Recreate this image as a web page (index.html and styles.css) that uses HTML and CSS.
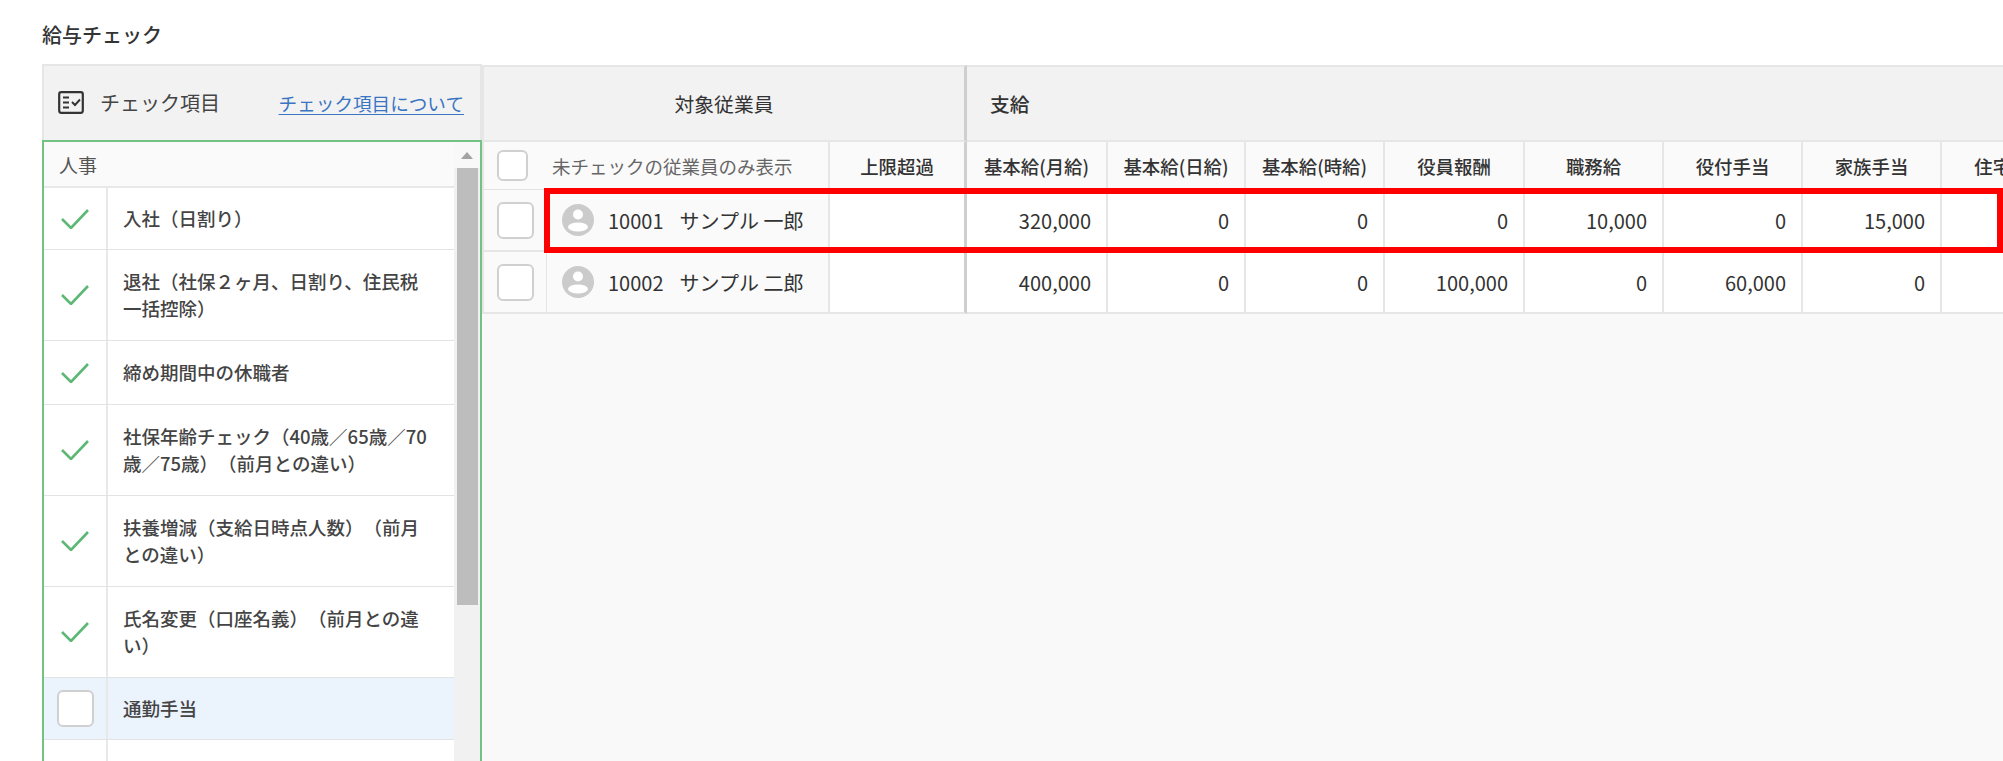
FILE: index.html
```html
<!DOCTYPE html>
<html lang="ja">
<head>
<meta charset="utf-8">
<title>給与チェック</title>
<link rel="stylesheet" href="styles.css">
</head>
<body>
<div class="page">
  <h1 class="title">給与チェック</h1>
  <div class="main">
    <section class="panel">
      <header class="panel-head">
        <svg class="head-icon" width="26" height="23" viewBox="0 0 26 23" fill="none" stroke="#333" stroke-width="2.2">
          <rect x="1.2" y="1.2" width="23.6" height="20.6" rx="2"/>
          <path d="M5 6.5h6M5 11.5h6M5 16.500h6" stroke-width="1.9"/>
          <path d="M14 11l3 3 5-5.500" stroke-width="1.9"/>
        </svg>
        <span class="head-label">チェック項目</span>
        <a class="head-link" href="#">チェック項目について</a>
      </header>
      <div class="panel-body">
        <div class="list">
          <div class="section">人事</div>
          <div class="item item-compact">
            <div class="mark"><svg class="tick" width="28" height="20" viewBox="0 0 28 20"><path d="M1 10l9 9L27 1" fill="none" stroke="#5cb874" stroke-width="2.6"/></svg></div>
            <div class="label">入社（日割り）</div>
          </div>
          <div class="item">
            <div class="mark"><svg class="tick" width="28" height="20" viewBox="0 0 28 20"><path d="M1 10l9 9L27 1" fill="none" stroke="#5cb874" stroke-width="2.6"/></svg></div>
            <div class="label">退社（社保２ヶ月、日割り、住民税一括控除）</div>
          </div>
          <div class="item">
            <div class="mark"><svg class="tick" width="28" height="20" viewBox="0 0 28 20"><path d="M1 10l9 9L27 1" fill="none" stroke="#5cb874" stroke-width="2.6"/></svg></div>
            <div class="label">締め期間中の休職者</div>
          </div>
          <div class="item">
            <div class="mark"><svg class="tick" width="28" height="20" viewBox="0 0 28 20"><path d="M1 10l9 9L27 1" fill="none" stroke="#5cb874" stroke-width="2.6"/></svg></div>
            <div class="label">社保年齢チェック（40歳／65歳／70歳／75歳）（前月との違い）</div>
          </div>
          <div class="item">
            <div class="mark"><svg class="tick" width="28" height="20" viewBox="0 0 28 20"><path d="M1 10l9 9L27 1" fill="none" stroke="#5cb874" stroke-width="2.6"/></svg></div>
            <div class="label">扶養増減（支給日時点人数）（前月との違い）</div>
          </div>
          <div class="item">
            <div class="mark"><svg class="tick" width="28" height="20" viewBox="0 0 28 20"><path d="M1 10l9 9L27 1" fill="none" stroke="#5cb874" stroke-width="2.6"/></svg></div>
            <div class="label">氏名変更（口座名義）（前月との違い）</div>
          </div>
          <div class="item item-compact item-active">
            <div class="mark"><span class="box"></span></div>
            <div class="label">通勤手当</div>
          </div>
          <div class="item item-fill">
            <div class="mark"></div>
            <div class="label"></div>
          </div>
        </div>
        <div class="scrollbar">
          <div class="scroll-btn"><span class="scroll-arrow"></span></div>
          <div class="scroll-thumb"></div>
        </div>
      </div>
    </section>

    <section class="grid-wrap">
      <table class="grid">
        <colgroup>
          <col class="c-check"><col class="c-name"><col class="c-limit">
          <col class="c-139"><col class="c-138"><col class="c-139"><col class="c-140"><col class="c-139"><col class="c-139"><col class="c-139"><col class="c-140">
        </colgroup>
        <thead>
          <tr class="group-row">
            <th colspan="3" class="group group-center">対象従業員</th>
            <th colspan="8" class="group group-left">支給</th>
          </tr>
          <tr class="sub-row">
            <th colspan="2" class="filter">
              <div class="filter-inner"><span class="box box-small"></span><span class="filter-text">未チェックの従業員のみ表示</span></div>
            </th>
            <th class="col-head col-end">上限超過</th>
            <th class="col-head">基本給(月給)</th>
            <th class="col-head">基本給(日給)</th>
            <th class="col-head">基本給(時給)</th>
            <th class="col-head">役員報酬</th>
            <th class="col-head">職務給</th>
            <th class="col-head">役付手当</th>
            <th class="col-head">家族手当</th>
            <th class="col-head">住宅手当</th>
          </tr>
        </thead>
        <tbody>
          <tr class="row-a">
            <td class="check-cell"><span class="box"></span></td>
            <td class="name-cell"><div class="person"><svg class="avatar" width="32" height="32" viewBox="0 0 32 32"><circle cx="16" cy="16" r="16" fill="#cbcbcb"/><circle cx="16" cy="10.500" r="5" fill="#fff"/><ellipse cx="16" cy="23" rx="10" ry="4.600" fill="#fff"/></svg><span class="emp-no">10001</span><span>サンプル 一郎</span></div></td>
            <td class="num col-end"></td>
            <td class="num">320,000</td><td class="num">0</td><td class="num">0</td><td class="num">0</td><td class="num">10,000</td><td class="num">0</td><td class="num">15,000</td><td class="num"></td>
          </tr>
          <tr class="row-b">
            <td class="check-cell"><span class="box"></span></td>
            <td class="name-cell"><div class="person"><svg class="avatar" width="32" height="32" viewBox="0 0 32 32"><circle cx="16" cy="16" r="16" fill="#cbcbcb"/><circle cx="16" cy="10.500" r="5" fill="#fff"/><ellipse cx="16" cy="23" rx="10" ry="4.600" fill="#fff"/></svg><span class="emp-no">10002</span><span>サンプル 二郎</span></div></td>
            <td class="num col-end"></td>
            <td class="num">400,000</td><td class="num">0</td><td class="num">0</td><td class="num">100,000</td><td class="num">0</td><td class="num">60,000</td><td class="num">0</td><td class="num"></td>
          </tr>
        </tbody>
      </table>
      <div class="highlight"></div>
    </section>
  </div>
</div>
</body>
</html>
```

FILE: styles.css
```css
* { box-sizing: border-box; }
html, body { margin: 0; height: 100%; background: #fff; overflow: hidden; }
body { font-family: "Noto Sans CJK JP", "Noto Sans", sans-serif; color: #333; text-spacing-trim: space-all; }
.page { height: 761px; padding: 22px 0 0 42px; display: flex; flex-direction: column; overflow: hidden; }
.title { margin: 0 0 16px; font-size: 20px; line-height: 26px; font-weight: 500; color: #333; }
.main { display: flex; flex: 1; min-height: 0; }

.panel { width: 440px; flex: none; display: flex; flex-direction: column; }
.panel-head { height: 76px; flex: none; display: flex; align-items: center; padding: 0 16px 2px 14px; background: #f2f2f2; border: 2px solid #e6e6e6; border-bottom: 0; }
.head-icon { flex: none; }
.head-label { margin-left: 16px; font-size: 20px; color: #444; }
.head-link { margin-left: auto; font-size: 18.6px; color: #3a75c4; text-decoration: underline; text-underline-offset: 3px; }
.panel-body { flex: 1; min-height: 0; display: flex; border: 2px solid #72c284; border-bottom: 0; overflow: hidden; }
.list { flex: 1; min-width: 0; }
.section { height: 46px; padding-left: 15px; display: flex; align-items: center; background: #fafafa; border-bottom: 2px solid #e8e8e8; font-size: 19px; color: #555; }
.item { display: flex; background: #fff; border-bottom: 1px solid #e3e3e3; }
.item-active { background: #ebf3fd; }
.item-fill { height: 100px; border-bottom: 0; }
.mark { width: 64px; flex: none; display: flex; align-items: center; justify-content: center; border-right: 2px solid #e8e8e8; }
.label { flex: 1; padding: 18px 24px 18px 15px; font-size: 18.5px; line-height: 27px; font-weight: 500; color: #444; }
.item-compact .label { padding-top: 17px; padding-bottom: 17px; }
.scrollbar { width: 26px; flex: none; background: #f1f1f1; display: flex; flex-direction: column; align-items: flex-end; }
.scroll-btn { width: 26px; height: 26px; flex: none; display: flex; justify-content: center; align-items: center; background: #f8f8f8; }
.scroll-arrow { width: 0; height: 0; border-left: 6px solid transparent; border-right: 6px solid transparent; border-bottom: 7px solid #a3a3a3; }
.scroll-thumb { width: 21px; height: 437px; flex: none; margin-right: 2px; background: #bdbdbd; }

.box { display: block; width: 37px; height: 37px; background: #fff; border: 2px solid #d0d0d0; border-radius: 6px; }
.box-small { width: 31px; height: 31px; flex: none; }

.grid-wrap { flex: 1; min-width: 0; position: relative; overflow: hidden; margin-top: 1px; background: #f9f9f9; }
.grid { table-layout: fixed; width: 1598px; border-collapse: separate; border-spacing: 0; }
.c-check { width: 65px; }
.c-name { width: 281px; }
.c-limit { width: 139px; }
.c-140 { width: 140px; }
.c-138 { width: 138px; }
.c-139 { width: 139px; }
.group-row { height: 77px; }
.group { padding: 0; background: #f2f2f2; border-top: 2px solid #e6e6e6; border-bottom: 2px solid #e6e6e6; font-size: 19.8px; font-weight: 500; color: #333; }
.group-center { text-align: center; border-right: 3px solid #cfcfcf; border-left: 2px solid #e6e6e6; font-weight: 400; }
.group-left { text-align: left; padding-left: 23px; }
.sub-row { height: 48px; }
.filter { padding: 0 0 0 13px; background: #fafafa; border-bottom: 1px solid #e3e3e3; border-left: 2px solid #e6e6e6; font-weight: 400; }
.filter-inner { display: flex; align-items: center; }
.filter-text { margin-left: 24px; font-size: 18.5px; color: #666; white-space: nowrap; }
.col-head { padding: 0; background: #fafafa; border-bottom: 1px solid #e3e3e3; border-left: 2px solid #e6e6e6; font-size: 18.4px; font-weight: 500; color: #333; text-align: center; white-space: nowrap; }
.col-end { border-right: 3px solid #cfcfcf; }
.col-end + .col-head, .col-end + .num { border-left: 0; }
.row-a { height: 62px; }
.row-b { height: 62px; }
.check-cell { padding: 0 0 0 13px; background: #fafafa; border-bottom: 2px solid #e6e6e6; border-left: 2px solid #e6e6e6; border-right: 1px solid #e6e6e6; }
.name-cell { padding: 0 0 0 15px; background: #fafafa; border-bottom: 2px solid #e6e6e6; font-size: 20px; color: #333; }
.person { display: flex; align-items: center; white-space: pre; }
.avatar { flex: none; }
.emp-no { margin: 0 16px 0 14px; }
.num { padding: 0 15px 0 0; background: #fff; border-bottom: 2px solid #e6e6e6; border-left: 2px solid #e6e6e6; text-align: right; font-size: 20px; color: #333; }
.highlight { position: absolute; left: 62px; top: 123px; width: 1459px; height: 65px; border: 6px solid #f00; pointer-events: none; }
```
